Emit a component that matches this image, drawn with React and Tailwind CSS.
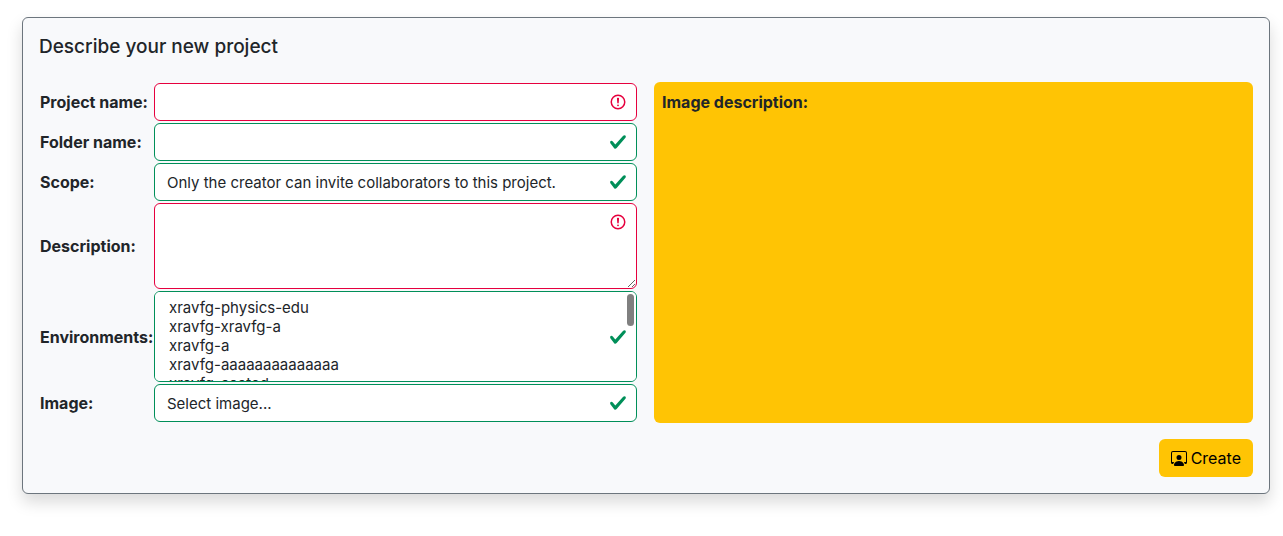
import { BsPersonWorkspace } from "react-icons/bs";

const environments = [
  "xravfg-physics-edu",
  "xravfg-xravfg-a",
  "xravfg-a",
  "xravfg-aaaaaaaaaaaaaa",
  "xravfg-aaated",
  "xravfg-b",
  "xravfg-c",
  "xravfg-d",
  "xravfg-e",
  "xravfg-f",
  "xravfg-g",
  "xravfg-h",
];

function ValidIcon() {
  return (
    <svg viewBox="0 0 8 8" className="size-[18px]" aria-hidden="true">
      <path
        fill="#008f59"
        d="M2.3 6.73.6 4.53c-.4-1.04.46-1.4 1.1-.8l1.1 1.4 3.4-3.8c.6-.63 1.6-.27 1.2.7l-4 4.6c-.43.5-.8.4-1.1.1z"
      />
    </svg>
  );
}

function InvalidIcon() {
  return (
    <svg viewBox="0 0 12 12" className="size-[18px]" fill="none" stroke="#e6003e" aria-hidden="true">
      <circle cx="6" cy="6" r="4.5" />
      <path strokeLinejoin="round" d="M5.8 3.6h.4L6 6.5z" />
      <circle cx="6" cy="8.2" r=".6" fill="#e6003e" stroke="none" />
    </svg>
  );
}

function Field({ id, label, invalid, top, children }) {
  return (
    <>
      <label htmlFor={id} className="self-center font-bold whitespace-nowrap">
        {label}
      </label>
      <div className="relative flex min-w-0">
        {children}
        <span
          className={
            top
              ? "pointer-events-none absolute top-[10px] right-[10px]"
              : "pointer-events-none absolute inset-y-0 right-[10px] flex items-center"
          }
        >
          {invalid ? <InvalidIcon /> : <ValidIcon />}
        </span>
      </div>
    </>
  );
}

const base = "block w-full min-w-0 rounded-md border bg-white px-3 text-[15px] outline-none";
const valid = "border-[#008f59]";
const invalid = "border-[#e6003e]";

export default function App() {
  return (
    <main className="pt-[17px] pr-[13px] pb-10 pl-[22px] font-['Inter','Liberation_Sans',sans-serif] text-base leading-6 text-[#212529]">
      <form
        className="rounded-md border border-[#6c757d] bg-[#f8f9fb] p-4 shadow-[0_8px_16px_rgba(0,0,0,0.15)]"
        onSubmit={(e) => e.preventDefault()}
      >
        <h1 className="mb-[22px] text-[19px] leading-[26px] font-medium">Describe your new project</h1>
        <div className="grid grid-cols-2 gap-4">
          <div className="grid grid-cols-[112px_minmax(0,1fr)] content-start gap-0.5 p-px">
            <Field id="name" label="Project name:" invalid>
              <input id="name" type="text" className={`${base} ${invalid} h-[38px] pr-9`} />
            </Field>
            <Field id="folder" label="Folder name:">
              <input id="folder" type="text" className={`${base} ${valid} h-[38px] pr-9`} />
            </Field>
            <Field id="scope" label="Scope:">
              <select id="scope" className={`${base} ${valid} h-[38px] appearance-none pt-0.5 pr-9`}>
                <option>Only the creator can invite collaborators to this project.</option>
              </select>
            </Field>
            <Field id="description" label="Description:" invalid top>
              <textarea id="description" className={`${base} ${invalid} h-[86px] resize-y py-1.5 pr-9`} />
            </Field>
            <Field id="environments" label="Environments:">
              <select
                id="environments"
                multiple
                className={`${base} ${valid} h-[91px] appearance-none py-1.5 [scrollbar-width:none]`}
              >
                {environments.map((name) => (
                  <option key={name} className="px-0.5">
                    {name}
                  </option>
                ))}
              </select>
              <span className="pointer-events-none absolute top-[3px] right-[3px] h-8 w-[7px] rounded-full bg-[#808080]" />
            </Field>
            <Field id="image" label="Image:">
              <select id="image" className={`${base} ${valid} h-[38px] appearance-none pt-0.5 pr-9`}>
                <option>Select image...</option>
              </select>
            </Field>
          </div>
          <section className="rounded-md bg-[#ffc404] p-2">
            <h2 className="font-bold">Image description:</h2>
          </section>
        </div>
        <div className="mt-4 flex justify-end">
          <button
            type="submit"
            className="flex h-[38px] items-center gap-1 rounded-md bg-[#ffc404] px-3 text-black"
          >
            <BsPersonWorkspace className="size-4" aria-hidden="true" />
            Create
          </button>
        </div>
      </form>
    </main>
  );
}
